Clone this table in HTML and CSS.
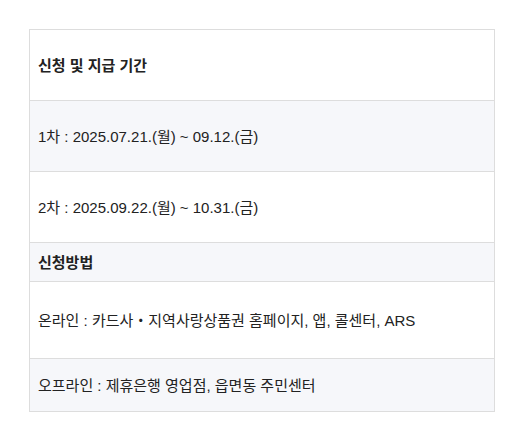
FILE: index.html
```html
<!DOCTYPE html>
<html lang="ko">
<head>
<meta charset="utf-8">
<link rel="stylesheet" href="styles.css">
</head>
<body>
<div class="table">
  <div class="row h70 head">신청 및 지급 기간</div>
  <div class="row h70 alt">1차 : 2025.07.21.(월) ~ 09.12.(금)</div>
  <div class="row h70">2차 : 2025.09.22.(월) ~ 10.31.(금)</div>
  <div class="row h38 alt head">신청방법</div>
  <div class="row h76">온라인 : 카드사・지역사랑상품권 홈페이지, 앱, 콜센터, ARS</div>
  <div class="row h52 alt">오프라인 : 제휴은행 영업점, 읍면동 주민센터</div>
</div>
</body>
</html>
```
FILE: styles.css
```css
html, body { margin: 0; background: #fff; }
body { padding: 29px 0 0 29px; font-family: "Liberation Sans", "Noto Sans CJK KR", sans-serif; font-size: 15px; color: #222; }
.table { width: 464px; border: 1px solid #ddd; }
.row { display: flex; align-items: center; padding: 0 8px 2px; border-top: 1px solid #ddd; box-sizing: content-box; }
.row:first-child { border-top: 0; }
.alt { background: #f6f7fa; }
.head { font-weight: bold; }
.h70 { height: 68px; }
.h38 { height: 36px; }
.h76 { height: 74px; }
.h52 { height: 50px; }
```
